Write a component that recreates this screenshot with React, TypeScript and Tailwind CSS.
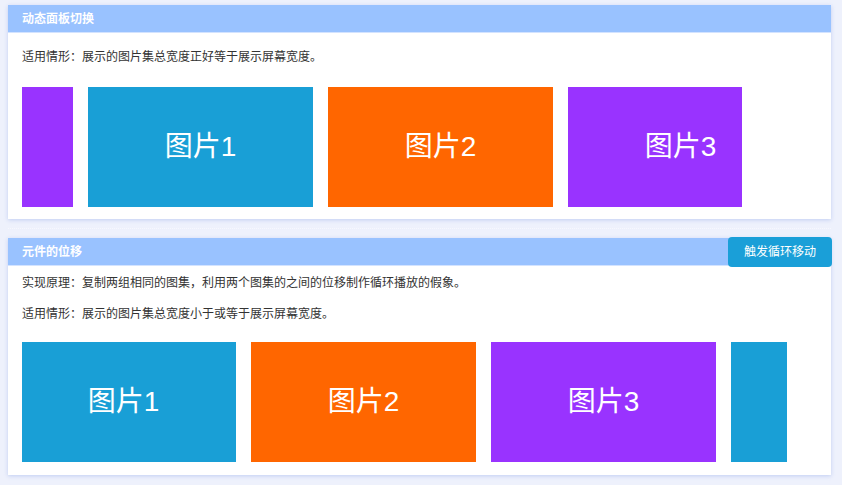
const FONT = { fontFamily: '"Liberation Sans", "Noto Sans CJK SC", sans-serif' };

interface Pic {
  label: string;
  color: string;
}

const PICS: Pic[] = [
  { label: "图片1", color: "bg-[#199fd6]" },
  { label: "图片2", color: "bg-[#ff6600]" },
  { label: "图片3", color: "bg-[#9933ff]" },
];

// partial tiles at the clipped edges carry no visible label
function Tile({ pic, bare = false }: { pic: Pic; bare?: boolean }) {
  return (
    <div
      className={`flex h-[120px] w-[225px] shrink-0 items-center justify-center text-[28px] text-white ${pic.color}`}
    >
      {bare ? null : pic.label}
    </div>
  );
}

function Card({
  title,
  action,
  children,
}: {
  title: string;
  action?: string;
  children: React.ReactNode;
}) {
  return (
    <section className="bg-white shadow-[0_1px_4px_rgba(140,165,230,0.45)]">
      <div className="flex h-[28px] items-center justify-between border-b border-[#d3e3ff] bg-[#99c2ff] pl-[14px]">
        <h2 className="text-[12px] font-bold text-white">{title}</h2>
        {action ? (
          <button
            type="button"
            className="-my-[2px] -mr-px h-[30px] rounded-[4px] bg-[#1a9fd8] px-[16px] text-[12px] text-white"
          >
            {action}
          </button>
        ) : null}
      </div>
      {children}
    </section>
  );
}

export default function App() {
  return (
    <div
      className="min-h-[485px] bg-[#eef1fc] pt-[5px] pr-[11px] pb-[10px] pl-[8px] text-[#333]"
      style={FONT}
    >
      <Card title="动态面板切换">
        <div className="px-[14px] pt-[14px] pb-[12px]">
          <p className="text-[12px] leading-[20px]">
            适用情形：展示的图片集总宽度正好等于展示屏幕宽度。
          </p>
          <div className="mt-[20px] w-[720px] overflow-hidden">
            <div className="-ml-[174px] flex gap-[15px]">
              <Tile pic={PICS[2]} bare />
              {PICS.map((p) => (
                <Tile key={p.label} pic={p} />
              ))}
            </div>
          </div>
        </div>
      </Card>

      <div className="my-[9px] border-t border-dotted border-[#f7f8fe]" />

      <Card title="元件的位移" action="触发循环移动">
        <div className="px-[14px] pt-[7px] pb-[13px]">
          <p className="text-[12px] leading-[20px]">
            实现原理：复制两组相同的图集，利用两个图集的之间的位移制作循环播放的假象。
          </p>
          <p className="mt-[11px] text-[12px] leading-[20px]">
            适用情形：展示的图片集总宽度小于或等于展示屏幕宽度。
          </p>
          <div className="mt-[18px] w-[765px] overflow-hidden">
            <div className="-ml-[11px] flex gap-[15px]">
              {PICS.map((p) => (
                <Tile key={p.label} pic={p} />
              ))}
              <Tile pic={PICS[0]} bare />
            </div>
          </div>
        </div>
      </Card>
    </div>
  );
}
